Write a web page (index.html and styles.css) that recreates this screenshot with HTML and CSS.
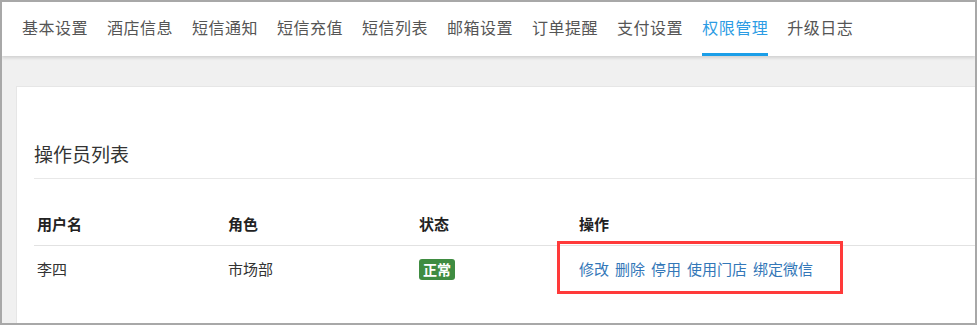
FILE: index.html
```html
<!DOCTYPE html>
<html lang="zh-CN">
<head>
  <meta charset="UTF-8">
  <title>权限管理</title>
  <link rel="stylesheet" href="styles.css">
</head>
<body>
  <div class="frame">
    <div class="tabs">
      <a class="tab">基本设置</a>
      <a class="tab">酒店信息</a>
      <a class="tab">短信通知</a>
      <a class="tab">短信充值</a>
      <a class="tab">短信列表</a>
      <a class="tab">邮箱设置</a>
      <a class="tab">订单提醒</a>
      <a class="tab">支付设置</a>
      <a class="tab active">权限管理</a>
      <a class="tab">升级日志</a>
    </div>
    <div class="content">
      <div class="card">
        <div class="card-title">操作员列表</div>
        <table class="list">
          <thead>
            <tr>
              <th class="col-name">用户名</th>
              <th class="col-role">角色</th>
              <th class="col-status">状态</th>
              <th>操作</th>
            </tr>
          </thead>
          <tbody>
            <tr>
              <td>李四</td>
              <td>市场部</td>
              <td><span class="badge">正常</span></td>
              <td class="ops">
                <div class="actions"><a>修改</a><a>删除</a><a>停用</a><a>使用门店</a><a>绑定微信</a></div>
                <div class="mark"></div>
              </td>
            </tr>
          </tbody>
        </table>
      </div>
    </div>
  </div>
</body>
</html>
```

FILE: styles.css
```css
body {
  margin: 0;
  font-family: "Microsoft YaHei", "Noto Sans CJK SC", sans-serif;
  color: #333;
}
.frame {
  width: 977px;
  height: 325px;
  box-sizing: border-box;
  border: 2px solid #a8a8a8;
  background-color: #f0f0f0;
  overflow: hidden;
}
.tabs {
  display: flex;
  height: 54px;
  padding-left: 20px;
  background-color: #fff;
  box-shadow: 0 2px 3px rgba(0, 0, 0, 0.13);
  position: relative;
}
.tab {
  margin-right: 19px;
  font-size: 16px;
  letter-spacing: 0.5px;
  line-height: 51px;
  color: #555;
  border-bottom: 3px solid transparent;
  cursor: pointer;
}
.tab.active {
  color: #2c9ce4;
  border-bottom-color: #1a9ee8;
}
.content {
  padding: 30px 0 0 14px;
}
.card {
  margin-right: -60px;
  height: 300px;
  padding: 52px 0 0 17px;
  background-color: #fff;
  border: 1px solid #e6e6e6;
}
.card-title {
  font-size: 19px;
  line-height: 30px;
  color: #333;
  padding-bottom: 9px;
  border-bottom: 1px solid #e8e8e8;
}
.list {
  margin-top: 26px;
  width: 100%;
  border-collapse: collapse;
  font-size: 15px;
}
.list th {
  text-align: left;
  font-weight: bold;
  color: #222;
  line-height: 22px;
  padding: 8px 3px 10px;
  border-bottom: 1px solid #e2e2e2;
}
.list td {
  line-height: 22px;
  padding: 11px 3px;
}
.col-name, .col-role {
  width: 185px;
}
.col-status {
  width: 154px;
}
.badge {
  display: inline-block;
  padding: 0 4px;
  line-height: 21px;
  font-size: 14px;
  font-weight: bold;
  color: #fff;
  background-color: #3f8c41;
  border-radius: 3px;
  vertical-align: middle;
}
.ops {
  position: relative;
}
.actions {
  display: flex;
  gap: 6px;
}
.actions a {
  color: #3377b8;
  cursor: pointer;
}
.mark {
  position: absolute;
  left: -19px;
  top: -5px;
  width: 286px;
  height: 53px;
  box-sizing: border-box;
  border: 3px solid #ff3a3a;
}
```
